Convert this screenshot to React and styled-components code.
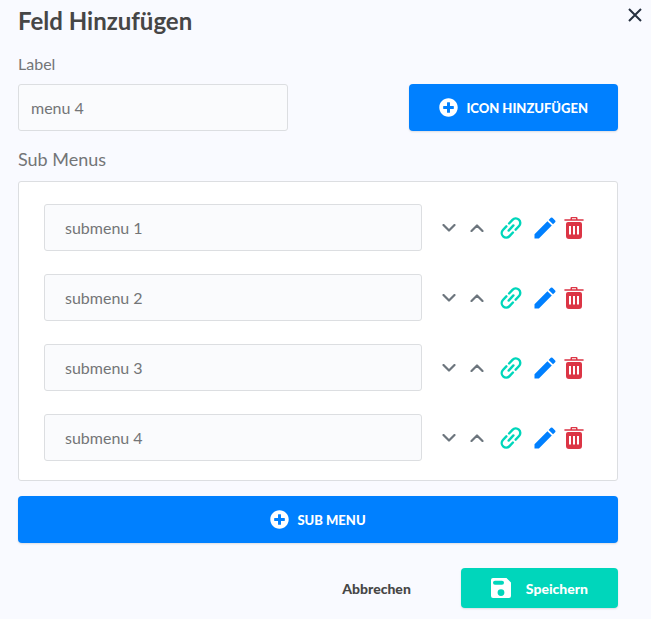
import React, { useState } from "react";
import styled, { createGlobalStyle } from "styled-components";
import { FaPlusCircle } from "react-icons/fa";
import { MdEdit } from "react-icons/md";

const GlobalStyle = createGlobalStyle`
  * {
    box-sizing: border-box;
  }
  body {
    margin: 0;
    background: #f9faff;
    color: #737577;
    font-family: Lato, "Open Sans", sans-serif;
    font-size: 16px;
  }
`;

const Dialog = styled.form`
  padding: 6px 33px 11px 18px;
`;

const Header = styled.header`
  display: flex;
  justify-content: space-between;
  align-items: flex-start;
  margin-right: -29px;
`;

const Title = styled.h1`
  margin: 0;
  color: #464646;
  font-size: 24px;
  font-weight: 700;
  line-height: 30px;
`;

const IconButton = styled.button`
  display: flex;
  align-items: center;
  justify-content: center;
  width: ${({ $width }) => $width || 28}px;
  height: ${({ $height }) => $height || 24}px;
  padding: 0;
  border: 0;
  background: none;
  color: ${({ $color }) => $color};
  cursor: pointer;
`;

const LabelRow = styled.div`
  display: flex;
  justify-content: space-between;
  align-items: flex-end;
  gap: 24px;
  margin-top: 18px;
`;

const Field = styled.div`
  display: flex;
  flex-direction: column;
  flex: 0 1 270px;
  min-width: 0;
`;

const Label = styled.label`
  margin-bottom: 10px;
  font-size: 16px;
  line-height: 20px;
`;

const Input = styled.input`
  width: 100%;
  height: 47px;
  padding: 0 ${({ $indent }) => $indent || 12}px;
  border: 1px solid #dcdee1;
  border-radius: 3px;
  background: #fafbfd;
  color: #737577;
  font-family: inherit;
  font-size: 16px;
`;

const Button = styled.button`
  display: flex;
  align-items: center;
  justify-content: center;
  gap: 8px;
  height: 47px;
  padding: 0 30px;
  border: 0;
  border-radius: 4px;
  background: #0080ff;
  box-shadow: 0 1px 2px rgba(0, 0, 0, 0.12);
  color: #fff;
  font-family: inherit;
  font-size: 13px;
  font-weight: 900;
  white-space: nowrap;
  cursor: pointer;
`;

const WideButton = styled(Button)`
  width: 100%;
  margin-top: 15px;
`;

const SaveButton = styled(Button)`
  gap: 15px;
  height: 40px;
  background: #00d6bb;
  font-size: 14px;
`;

const CancelButton = styled(Button)`
  height: 40px;
  background: none;
  box-shadow: none;
  color: #464646;
  font-size: 14px;
`;

const SubTitle = styled.h2`
  margin: 17px 0 10px;
  font-size: 18px;
  font-weight: 400;
  line-height: 23px;
`;

const Panel = styled.ul`
  display: flex;
  flex-direction: column;
  gap: 23px;
  margin: 0;
  padding: 22px 25px 19px;
  border: 1px solid #dcdee1;
  border-radius: 3px;
  background: #fff;
  list-style: none;
`;

const Row = styled.li`
  display: flex;
  align-items: center;
  gap: 13px;
`;

const Actions = styled.div`
  display: flex;
  align-items: center;
  flex-shrink: 0;
  padding-right: 3px;
`;

const Footer = styled.footer`
  display: flex;
  justify-content: flex-end;
  gap: 20px;
  margin-top: 25px;
`;

const CloseIcon = () => (
  <svg width="14" height="14" viewBox="0 0 14 14" fill="none" stroke="currentColor" strokeWidth="2">
    <path d="M1 1l12 12M13 1L1 13" />
  </svg>
);

const ChevronIcon = ({ up }) => (
  <svg width="14" height="8" viewBox="0 0 14 8" fill="none" stroke="currentColor" strokeWidth="2.2" strokeLinecap="round" strokeLinejoin="round">
    <path d={up ? "M1.5 7L7 1.5L12.5 7" : "M1.5 1L7 6.5L12.5 1"} />
  </svg>
);

const LinkIcon = () => (
  <svg width="22" height="22" viewBox="-11 -11 22 22" fill="none" stroke="currentColor" strokeWidth="2.4" strokeLinecap="round">
    <g transform="rotate(-47)">
      <path d="M-2 -4.5H-7a4.5 4.5 0 0 0 0 9H-2" />
      <path d="M2 -4.5H7a4.5 4.5 0 0 1 0 9H2" />
      <path d="M-3.5 0H3.5" />
    </g>
  </svg>
);

const TrashIcon = () => (
  <svg width="20" height="22" viewBox="0 0 20 22" fill="currentColor">
    <path
      fillRule="evenodd"
      d="M7.5 0h5a1 1 0 0 1 1 1v1.200H19a.8.8 0 0 1 0 1.600H1a.8.8 0 0 1 0-1.600h5.500V1a1 1 0 0 1 1-1zM8 1.300v.9h4v-.9zM4 5h12a2 2 0 0 1 2 2v12a3 3 0 0 1-3 3H5a3 3 0 0 1-3-3V7a2 2 0 0 1 2-2zM5 9v8.500h2V9zM9 9v8.500h2V9zM13 9v8.500h2V9z"
    />
  </svg>
);

const SaveIcon = () => (
  <svg width="20" height="20" viewBox="0 0 20 20" fill="currentColor">
    <path
      fillRule="evenodd"
      d="M2 0h13.500L20 4.500V18a2 2 0 0 1-2 2H2a2 2 0 0 1-2-2V2a2 2 0 0 1 2-2zM4 2.700a2 2 0 0 0 0 4h7a2 2 0 0 0 0-4zM10 11.200a3.400 3.400 0 1 0 0 6.800a3.400 3.400 0 1 0 0-6.800z"
    />
  </svg>
);

function SubMenuRow({ name, onChange }) {
  return (
    <Row>
      <Input $indent={20} aria-label={name} value={name} onChange={(e) => onChange(e.target.value)} />
      <Actions>
        <IconButton type="button" aria-label="Nach unten" $color="#6c757d"><ChevronIcon /></IconButton>
        <IconButton type="button" aria-label="Nach oben" $color="#6c757d"><ChevronIcon up /></IconButton>
        <IconButton type="button" aria-label="Link" $width={40} $color="#00d6bb"><LinkIcon /></IconButton>
        <IconButton type="button" aria-label="Bearbeiten" $color="#0080ff"><MdEdit size={28} /></IconButton>
        <IconButton type="button" aria-label="Löschen" $width={30} $color="#dc3545"><TrashIcon /></IconButton>
      </Actions>
    </Row>
  );
}

function App() {
  const [label, setLabel] = useState("menu 4");
  const [subMenus, setSubMenus] = useState(["submenu 1", "submenu 2", "submenu 3", "submenu 4"]);

  const rename = (index, value) => {
    setSubMenus(subMenus.map((item, i) => (i === index ? value : item)));
  };

  return (
    <>
      <GlobalStyle />
      <Dialog onSubmit={(e) => e.preventDefault()}>
        <Header>
          <Title>Feld Hinzufügen</Title>
          <IconButton type="button" aria-label="Schließen" $width={24} $height={18} $color="#263040"><CloseIcon /></IconButton>
        </Header>
        <LabelRow>
          <Field>
            <Label htmlFor="label">Label</Label>
            <Input id="label" value={label} onChange={(e) => setLabel(e.target.value)} />
          </Field>
          <Button type="button"><FaPlusCircle size={19} />ICON HINZUFÜGEN</Button>
        </LabelRow>
        <SubTitle>Sub Menus</SubTitle>
        <Panel>
          {subMenus.map((name, i) => (
            <SubMenuRow key={i} name={name} onChange={(value) => rename(i, value)} />
          ))}
        </Panel>
        <WideButton type="button"><FaPlusCircle size={19} />SUB MENU</WideButton>
        <Footer>
          <CancelButton type="button">Abbrechen</CancelButton>
          <SaveButton type="submit"><SaveIcon />Speichern</SaveButton>
        </Footer>
      </Dialog>
    </>
  );
}

export default App;
